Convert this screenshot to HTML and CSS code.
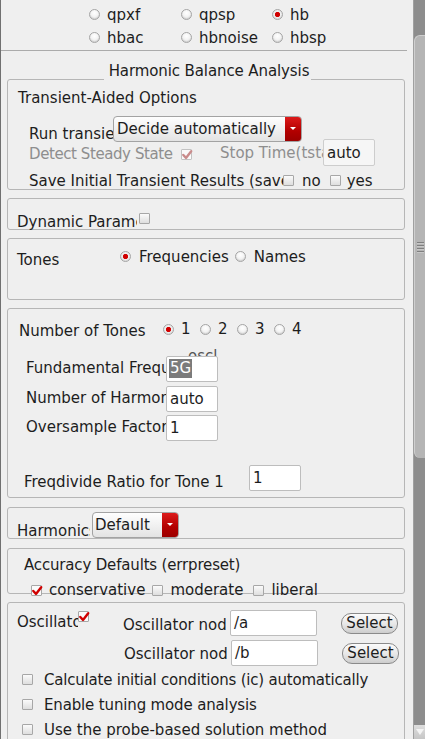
FILE: index.html
```html
<!DOCTYPE html>
<html>
<head>
<meta charset="utf-8">
<link rel="stylesheet" href="styles.css">
</head>
<body>
<div class="window">
  <div class="content">
    <div class="analyses">
      <div class="opt"><span class="radio"></span><span>qpss</span></div>
      <div class="opt"><span class="radio"></span><span>qpac</span></div>
      <div class="opt"><span class="radio"></span><span>qpnoise</span></div>
      <div class="opt"><span class="radio"></span><span>qpxf</span></div>
      <div class="opt"><span class="radio"></span><span>qpsp</span></div>
      <div class="opt"><span class="radio on"></span><span>hb</span></div>
      <div class="opt"><span class="radio"></span><span>hbac</span></div>
      <div class="opt"><span class="radio"></span><span>hbnoise</span></div>
      <div class="opt"><span class="radio"></span><span>hbsp</span></div>
    </div>
    <div class="sep"></div>
    <div class="hb-title"><span>Harmonic Balance Analysis</span></div>

    <div class="box box-trans">
      <div class="box-head">Transient-Aided Options</div>
      <div class="row row-run">
        <span class="lbl clip w-run">Run transient</span>
        <div class="combo combo-run"><span class="combo-text">Decide automatically</span><span class="combo-arrow"><span class="tri"></span></span></div>
      </div>
      <div class="row row-detect">
        <span class="lbl clip dis w-detect">Detect Steady State</span>
        <span class="check on dis"><svg viewBox="0 0 12 12" width="12" height="12"><path d="M2.3 6 L5 8.9 L10.2 2.2" /></svg></span>
        <span class="lbl clip dis w-stop">Stop Time(tstab)</span>
        <div class="field field-auto">auto</div>
      </div>
      <div class="row row-save">
        <span class="lbl clip w-save">Save Initial Transient Results (saveinit)</span>
        <span class="check"></span><span class="chk-text">no</span>
        <span class="check chk-yes"></span><span class="chk-text">yes</span>
      </div>
    </div>

    <div class="box box-dyn">
      <div class="row row-dyn">
        <span class="lbl clip w-dyn">Dynamic Parameter</span>
        <span class="check"></span>
      </div>
    </div>

    <div class="box box-tones">
      <div class="row row-tones">
        <span class="lbl w-tones">Tones</span>
        <div class="opt"><span class="radio on"></span><span>Frequencies</span></div>
        <div class="opt opt-names"><span class="radio"></span><span>Names</span></div>
      </div>
    </div>

    <div class="box box-num">
      <div class="row row-num">
        <span class="lbl w-num">Number of Tones</span>
        <div class="num-opts">
          <div class="opt opt-num"><span class="radio on"></span><span>1</span></div>
          <div class="opt opt-num"><span class="radio"></span><span>2</span></div>
          <div class="opt opt-num"><span class="radio"></span><span>3</span></div>
          <div class="opt opt-num"><span class="radio"></span><span>4</span></div>
        </div>
      </div>
      <div class="oscl">oscl</div>
      <div class="row row-field row-fund">
        <span class="lbl clip w-field">Fundamental Frequency</span>
        <div class="field"><span class="sel">5G</span></div>
      </div>
      <div class="row row-field row-harm">
        <span class="lbl clip w-field">Number of Harmonics</span>
        <div class="field">auto</div>
      </div>
      <div class="row row-field row-over">
        <span class="lbl clip w-field">Oversample Factor</span>
        <div class="field">1</div>
      </div>
      <div class="row row-field row-div">
        <span class="lbl w-div">Freqdivide Ratio for Tone 1</span>
        <div class="field">1</div>
      </div>
    </div>

    <div class="box box-harm">
      <div class="row row-harmsel">
        <span class="lbl clip w-harm">Harmonics</span>
        <div class="combo combo-def"><span class="combo-text">Default</span><span class="combo-arrow"><span class="tri"></span></span></div>
      </div>
    </div>

    <div class="box box-acc">
      <div class="box-head acc-head">Accuracy Defaults (errpreset)</div>
      <div class="row row-acc">
        <span class="check on"><svg viewBox="0 0 12 12" width="12" height="12"><path d="M2.3 6 L5 8.9 L10.2 2.2" /></svg></span><span class="chk-text t-cons">conservative</span>
        <span class="check"></span><span class="chk-text t-mod">moderate</span>
        <span class="check"></span><span class="chk-text">liberal</span>
      </div>
    </div>

    <div class="box box-osc">
      <div class="row row-osc row-osc-a">
        <span class="lbl clip w-osc">Oscillator</span>
        <span class="check on osc-check"><svg viewBox="0 0 12 12" width="12" height="12"><path d="M2.3 6 L5 8.9 L10.2 2.2" /></svg></span>
        <span class="lbl clip w-node node-a">Oscillator node</span>
        <div class="field field-node">/a</div>
        <div class="btn">Select</div>
      </div>
      <div class="row row-osc row-osc-b">
        <span class="lbl clip w-node node-b">Oscillator node</span>
        <div class="field field-node">/b</div>
        <div class="btn">Select</div>
      </div>
      <div class="checklist">
        <div class="chk-line t-calc"><span class="check"></span><span>Calculate initial conditions (ic) automatically</span></div>
        <div class="chk-line t-tune"><span class="check"></span><span>Enable tuning mode analysis</span></div>
        <div class="chk-line"><span class="check"></span><span>Use the probe-based solution method</span></div>
      </div>
    </div>
  </div>

  <div class="scrollbar">
    <div class="sb-top"></div>
    <div class="sb-thumb">
      <div class="grip"><span></span><span></span><span></span><span></span></div>
    </div>
    <div class="sb-fill"></div>
    <div class="sb-arrow"><span class="sb-tri"></span></div>
  </div>
</div>
</body>
</html>
```

FILE: styles.css
```css
html, body {
  margin: 0;
  padding: 0;
  background: #efefef;
}
body {
  font-family: "DejaVu Sans", sans-serif;
  font-size: 15px;
  line-height: 18px;
  color: #1d1d1d;
}
.window {
  display: flex;
  width: 425px;
  height: 739px;
  overflow: hidden;
}
.content {
  width: 412px;
  flex: none;
  border-left: 1px solid #707070;
  overflow: hidden;
}

/* radio / check */
.opt {
  display: flex;
  align-items: flex-start;
  height: 18px;
  white-space: nowrap;
}
.radio {
  flex: none;
  box-sizing: border-box;
  width: 11px;
  height: 11px;
  margin-top: 3px;
  margin-right: 7px;
  border-radius: 50%;
  border: 1px solid #a5a5a5;
  background: radial-gradient(circle at 50% 35%, #ffffff 0%, #f4f4f4 45%, #d6d6d6 100%);
  box-shadow: inset 0 -1px 1px rgba(0,0,0,0.08);
}
.radio.on {
  background: radial-gradient(circle at 50% 50%, #c80000 0, #d40000 2.2px, #f0f0f0 3px, #e2e2e2 100%);
}
.check {
  flex: none;
  box-sizing: border-box;
  width: 11px;
  height: 11px;
  border: 1px solid #a7a7a7;
  border-radius: 1px;
  background: linear-gradient(#fbfbfb, #dedede);
}
.check svg {
  display: block;
  margin: -1px 0 0 -1px;
  fill: none;
  stroke: #d00000;
  stroke-width: 2.4;
  stroke-linecap: round;
  stroke-linejoin: round;
  overflow: visible;
}
.check.on {
  background: #fafafa;
}
.check.dis {
  border-color: #c2c2c2;
}
.check.dis svg {
  stroke: #c98b8b;
}

.lbl {
  flex: none;
  white-space: nowrap;
}
.clip {
  overflow: hidden;
}
.dis {
  color: #8e8e8e;
}

/* top analyses */
.analyses {
  display: grid;
  grid-template-columns: 92px 91px 1fr;
  grid-template-rows: 23px 23px 21px;
  margin-top: -17px;
  padding-left: 88px;
  height: 67px;
  box-sizing: border-box;
}
.sep {
  height: 1px;
  background: #ababab;
  margin-right: 6px;
}
.hb-title {
  margin: 11px 8px 0 9px;
  height: 18px;
  text-align: center;
  letter-spacing: -0.1px;
}
.hb-title span {
  background: #efefef;
  padding: 0 2px 0 5px;
}

/* boxes */
.box {
  box-sizing: border-box;
  border: 1px solid #b6b6b6;
  border-radius: 3px;
  margin: 8px 8px 0 6px;
}
.row {
  display: flex;
  align-items: flex-start;
}
.box-trans {
  height: 111px;
  margin-top: -1px;
}
.box-head {
  margin: 9px 0 0 10px;
}
.row-run {
  height: 26px;
  margin-top: 9px;
  padding-left: 21px;
}
.w-run {
  width: 84px;
  margin-top: 9px;
}
.combo {
  box-sizing: border-box;
  display: flex;
  height: 26px;
  border: 1px solid #a3a3a3;
  border-radius: 4px;
  background: linear-gradient(#fefefe, #f1f1f1 50%, #e3e3e3);
  overflow: hidden;
}
.combo-text {
  flex: 1;
  padding: 3px 0 0 3px;
  white-space: nowrap;
}
.combo-arrow {
  flex: none;
  width: 16px;
  display: flex;
  align-items: center;
  justify-content: center;
  background: linear-gradient(#dc1a1a, #b20000 60%, #9c0000);
}
.tri {
  width: 0;
  height: 0;
  border-left: 3px solid transparent;
  border-right: 3px solid transparent;
  border-top: 3px solid #ffffff;
  margin-top: -1px;
}
.combo-run {
  width: 189px;
}
.row-detect {
  height: 27px;
  margin-top: -3px;
  padding-left: 21px;
}
.w-detect {
  width: 152px;
  margin-top: 6px;
  letter-spacing: -0.42px;
}
.row-detect .check {
  margin-top: 10px;
}
.w-stop {
  width: 103px;
  margin: 5px 0 0 28px;
}
.field {
  box-sizing: border-box;
  flex: none;
  width: 52px;
  height: 26px;
  border: 1px solid #bdbdbd;
  border-radius: 2px;
  background: #ffffff;
  padding: 3px 0 0 3px;
  white-space: nowrap;
}
.field-auto {
  height: 27px;
  background: #f6f6f6;
  border-color: #cdcdcd;
  padding-top: 4px;
}
.row-save {
  height: 18px;
  margin-top: 6px;
  padding-left: 21px;
}
.w-save {
  width: 254px;
}
.row-save .check {
  margin-top: 3px;
}
.chk-text {
  margin-left: 7px;
  white-space: nowrap;
}
.row-save .chk-text {
  margin-left: 8px;
}
.row-save .chk-yes {
  margin-left: 9px;
}
.row-save .chk-yes + .chk-text {
  margin-left: 6px;
}

.box-dyn {
  height: 32px;
}
.row-dyn {
  padding: 14px 0 0 9px;
}
.w-dyn {
  width: 120px;
  margin-right: 2px;
}

.box-tones {
  height: 62px;
}
.row-tones {
  padding: 9px 0 0 9px;
}
.w-tones {
  width: 103px;
  margin-top: 3px;
}
.opt-names {
  margin-left: 6px;
}
.row-tones .radio {
  margin-right: 8px;
}

.box-num {
  height: 190px;
}
.row-num {
  padding: 13px 0 0 11px;
}
.w-num {
  width: 144px;
}
.num-opts {
  display: flex;
  margin-top: -2px;
}
.opt-num {
  width: 37px;
}
.opt-num .radio {
  margin-top: 4px;
}
.oscl {
  margin: 7px 0 0 180px;
  color: #555555;
  height: 18px;
}
.row-field {
  height: 26px;
  padding-left: 18px;
}
.row-fund {
  margin-top: -9px;
}
.row-harm {
  margin-top: 4px;
}
.row-over {
  margin-top: 3px;
}
.row-div {
  margin-top: 24px;
  padding-left: 16px;
}
.w-field {
  width: 140px;
  margin-top: 3px;
}
.w-div {
  width: 225px;
  margin-top: 8px;
}
.sel {
  display: inline-block;
  height: 19px;
  line-height: 19px;
  background: #7b7b7b;
  color: #ffffff;
  padding: 0 1px;
  margin: -1px 0 0 -1px;
  vertical-align: top;
}

.box-harm {
  height: 32px;
  margin-top: 9px;
}
.row-harmsel {
  padding: 4px 0 0 9px;
}
.w-harm {
  width: 73px;
  margin: 10px 2px 0 0;
}
.combo-def {
  width: 87px;
}
.combo-def .combo-text {
  padding-left: 2px;
}

.box-acc {
  height: 46px;
  margin-top: 9px;
}
.acc-head {
  margin: 7px 0 0 16px;
  letter-spacing: -0.17px;
}
.row-acc {
  margin-top: 7px;
  padding-left: 23px;
  height: 18px;
}
.row-acc .check {
  margin-top: 4px;
}
.row-acc .t-mod {
  margin-right: 10px;
}
.row-acc .t-cons {
  margin-right: 7px;
}

.box-osc {
  height: 160px;
}
.row-osc {
  height: 26px;
}
.row-osc-a {
  margin-top: 7px;
  padding-left: 9px;
}
.row-osc-b {
  margin-top: 4px;
  padding-left: 116px;
}
.w-osc {
  width: 61px;
  margin-top: 3px;
}
.osc-check {
  margin-top: 1px;
}
.w-node {
  width: 103px;
  margin-right: 4px;
}
.node-a {
  margin: 6px 4px 0 34px;
}
.node-b {
  margin-top: 5px;
}
.field-node {
  width: 87px;
}
.btn {
  box-sizing: border-box;
  flex: none;
  width: 57px;
  height: 21px;
  margin: 3px 0 0 24px;
  border: 1px solid #8a8a8a;
  border-radius: 10px;
  background: linear-gradient(#fbfbfb, #e6e6e6 55%, #cdcdcd);
  text-align: center;
  line-height: 19px;
}
.checklist {
  margin-top: 5px;
  padding-left: 14px;
}
.chk-line {
  display: flex;
  align-items: flex-start;
  height: 25px;
  white-space: nowrap;
}
.chk-line .check {
  margin: 3px 11px 0 0;
}
.t-calc {
  letter-spacing: -0.21px;
}
.t-tune {
  letter-spacing: -0.15px;
}

/* scrollbar */
.scrollbar {
  flex: none;
  width: 12px;
  box-sizing: border-box;
  border-left: 1px solid #a0a0a0;
  background: #8d8d8d;
  display: flex;
  flex-direction: column;
}
.sb-top {
  height: 35px;
  flex: none;
}
.sb-thumb {
  flex: none;
  height: 423px;
  box-sizing: border-box;
  background: #b5b5b5;
  border-left: 1px solid #cfcfcf;
  border-top: 1px solid #cfcfcf;
  border-radius: 6px 0 0 6px;
  display: flex;
  align-items: center;
  justify-content: flex-end;
}
.grip {
  display: flex;
  flex-direction: column;
  gap: 1px;
  margin-right: 1px;
}
.grip span {
  display: block;
  width: 7px;
  height: 1px;
  background: #7f7f7f;
  border-bottom: 1px solid #c8c8c8;
}
.sb-fill {
  flex: 1;
}
.sb-arrow {
  flex: none;
  height: 14px;
  background: linear-gradient(#dedede, #c6c6c6);
  display: flex;
  align-items: center;
  justify-content: center;
}
.sb-tri {
  width: 0;
  height: 0;
  border-left: 4px solid transparent;
  border-right: 4px solid transparent;
  border-top: 6px solid #f4f4f4;
}
```
